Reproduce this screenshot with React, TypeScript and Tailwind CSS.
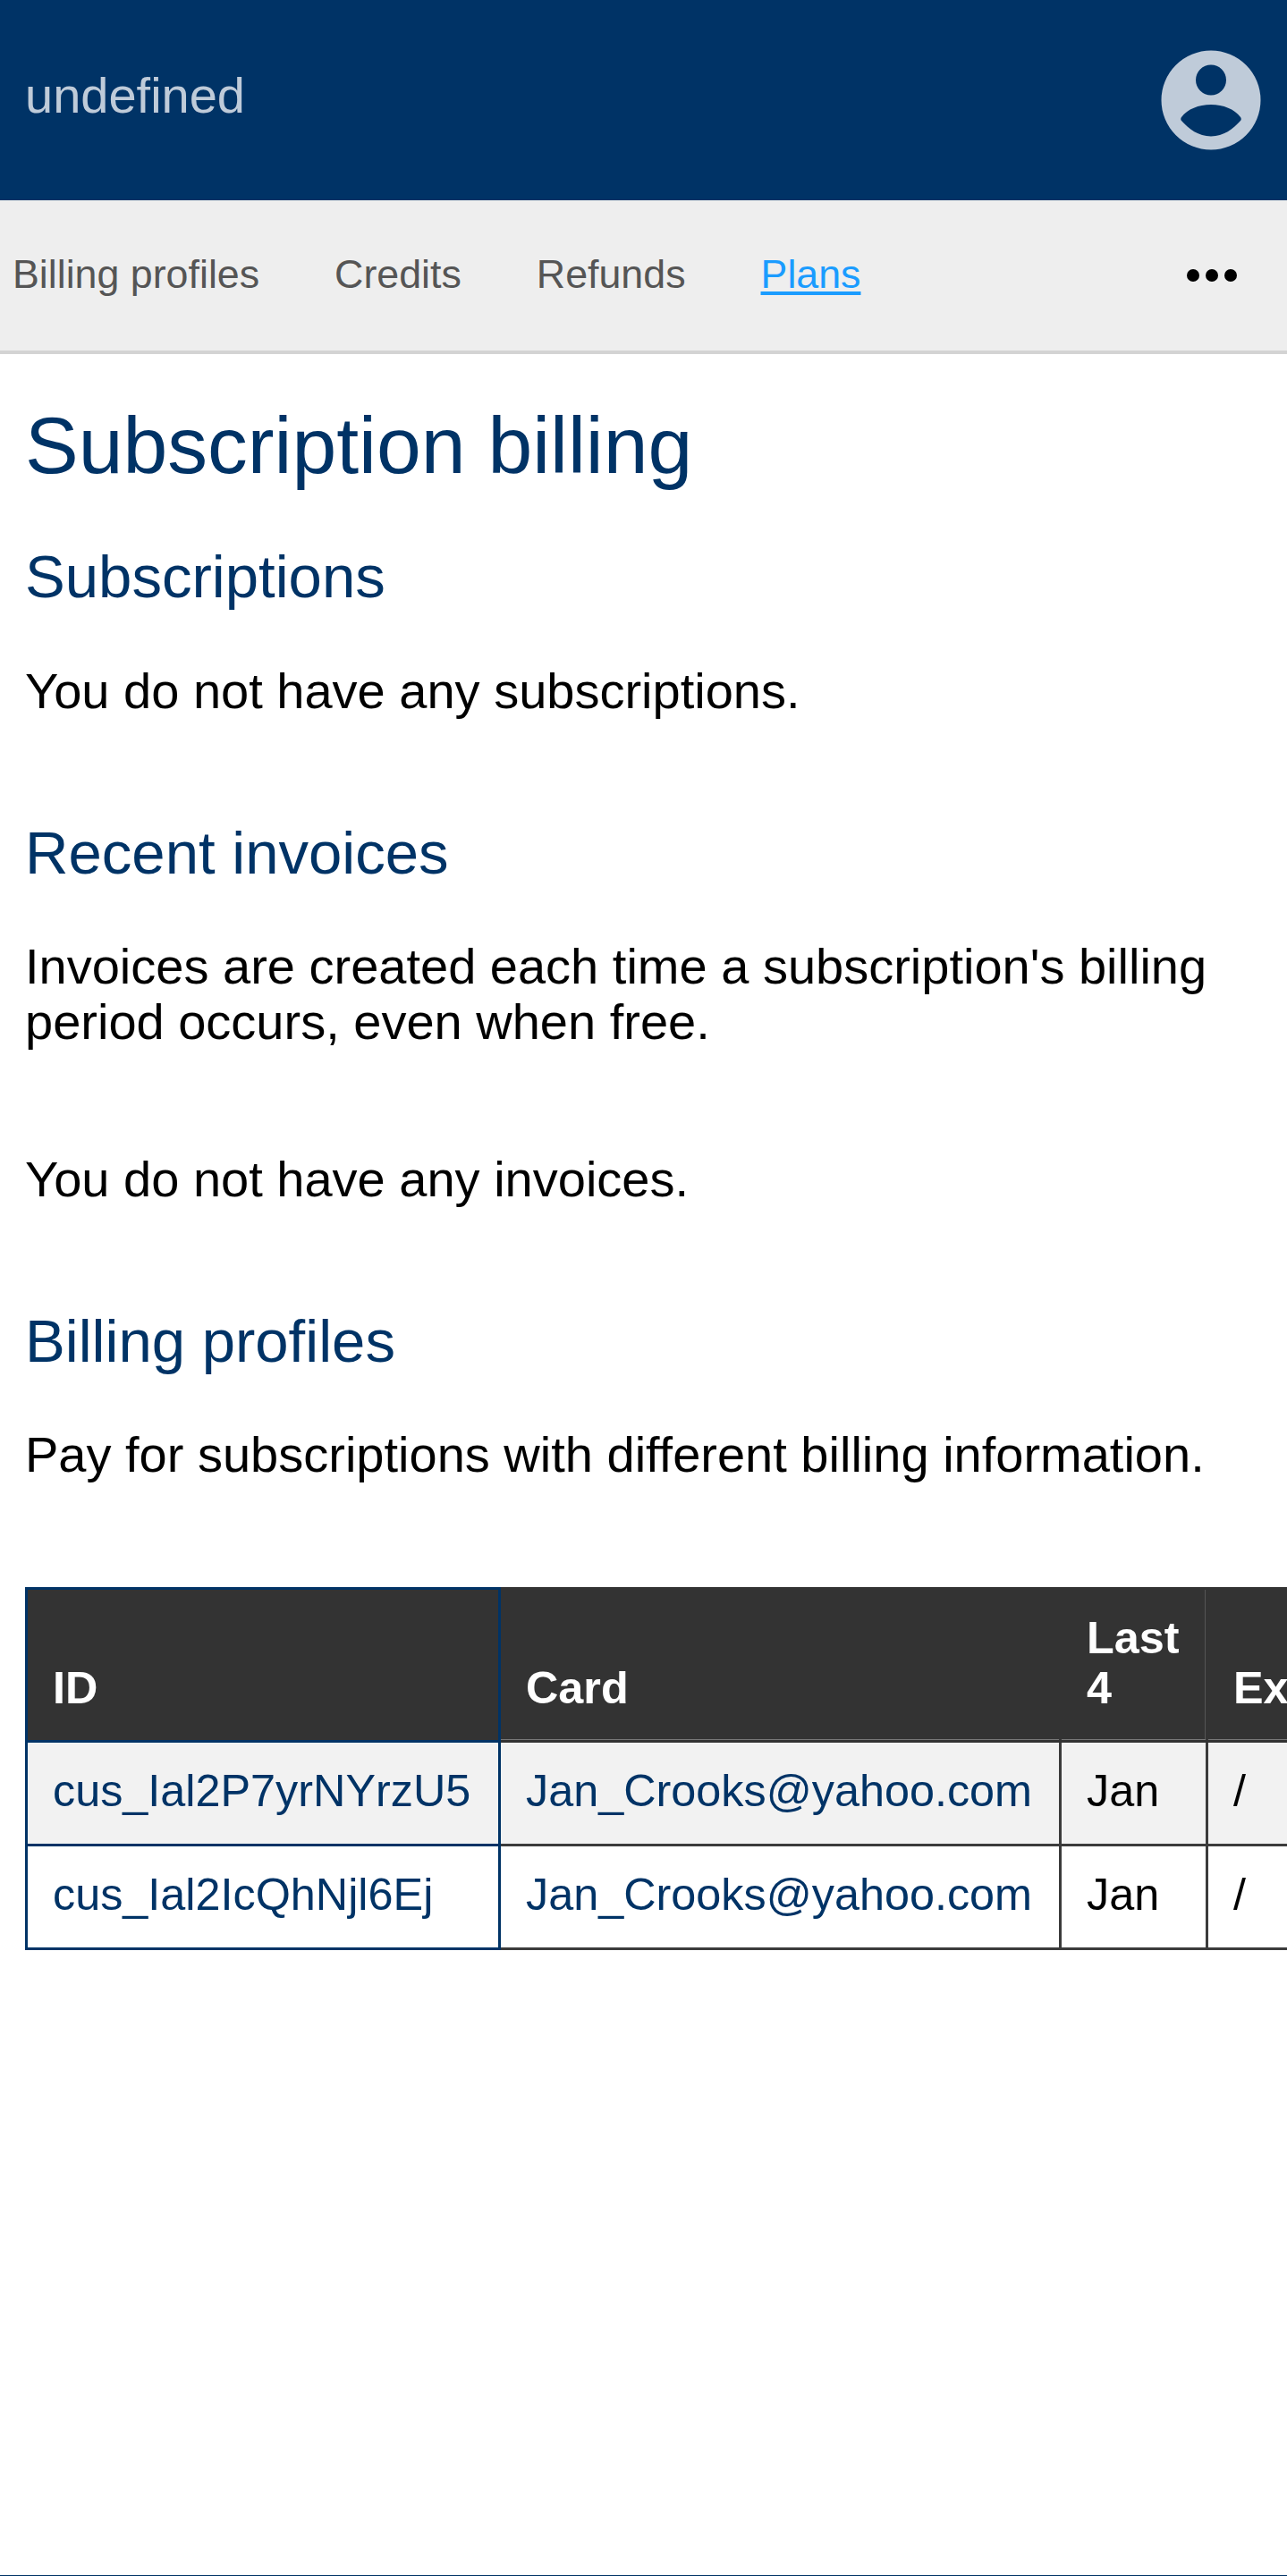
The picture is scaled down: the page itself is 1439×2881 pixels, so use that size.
function Avatar() {
  return (
    <svg width="112" height="112" viewBox="-56 -56 112 112" className="block">
      <path
        fill="#bfcbd9"
        fillRule="evenodd"
        d="M0 -55.5A55.5 55.5 0 1 1 0 55.5A55.5 55.5 0 1 1 0 -55.5ZM0 -39.5A17 17 0 1 0 0 -5.5A17 17 0 1 0 0 -39.5ZM-33 19C-26 10 -14 5 0 5C14 5 26 10 33 19C34 20.5 34 22 33 23C25 32 14 40.5 0 40.5C-14 40.5 -25 32 -33 23C-34 22 -34 20.5 -33 19Z"
      />
    </svg>
  );
}

function Dots() {
  return (
    <svg width="56" height="14" viewBox="0 0 56 14" className="block">
      <circle cx="7" cy="7" r="7" fill="#000" />
      <circle cx="28" cy="7" r="7" fill="#000" />
      <circle cx="49" cy="7" r="7" fill="#000" />
    </svg>
  );
}

const rows = [
  { id: 'cus_Ial2P7yrNYrzU5', bg: 'bg-[#f2f2f2]' },
  { id: 'cus_Ial2IcQhNjl6Ej', bg: 'bg-white' },
];

export default function App() {
  return (
    <div className="flex h-[2881px] flex-col overflow-hidden bg-white font-['Liberation_Sans',Arial,sans-serif] text-black">
      <header className="flex h-[224px] shrink-0 items-center justify-between bg-[#003366] pl-[28px] pr-[29px]">
        <span className="mb-[11px] text-[56px] leading-[62px] text-[#bfcbd9]">undefined</span>
        <Avatar />
      </header>

      <nav className="flex h-[172px] shrink-0 items-center justify-between border-b-4 border-[#d3d3d3] bg-[#eeeeee] pl-[14px] pr-[56px]">
        <div className="mb-[4px] flex items-center gap-[84px] text-[44.75px] leading-[50px] text-[#555555]">
          <span>Billing profiles</span>
          <span>Credits</span>
          <span>Refunds</span>
          <a className="text-[#1a9cff] underline decoration-[4px] underline-offset-[4px]">Plans</a>
        </div>
        <Dots />
      </nav>

      <main className="flex-1 px-[28px]">
        <h1 className="mt-[51px] text-[89.5px] leading-[103px] text-[#003366]">Subscription billing</h1>
        <h2 className="mt-[56px] text-[67.1px] leading-[77px] text-[#003366]">Subscriptions</h2>
        <p className="mt-[59px] text-[56px] leading-[62.6px]">You do not have any subscriptions.</p>

        <h2 className="mt-[110px] text-[67.1px] leading-[77px] text-[#003366]">Recent invoices</h2>
        <p className="mt-[58px] text-[56px] leading-[62.6px]">
          Invoices are created each time a subscription's billing period occurs, even when free.
        </p>
        <p className="mt-[113px] text-[56px] leading-[62.6px]">You do not have any invoices.</p>

        <h2 className="mt-[111px] text-[67.1px] leading-[77px] text-[#003366]">Billing profiles</h2>
        <p className="mt-[58px] text-[56px] leading-[62.6px]">
          Pay for subscriptions with different billing information.
        </p>

        <table className="mt-[116px] w-[1500px] table-fixed border-collapse text-[50.35px] leading-[57px]">
          <colgroup>
            <col className="w-[529px]" />
            <col className="w-[627px]" />
            <col className="w-[164px]" />
            <col className="w-[179px]" />
          </colgroup>
          <thead>
            <tr className="bg-[#333333] text-left font-bold leading-[56px] text-white">
              <th className="border-[3px] border-[#003366] px-[28px] pb-[30px] pt-[26.5px] align-bottom">ID</th>
              <th className="border-[3px] border-[#333333] px-[28px] pb-[30px] pt-[26.5px] align-bottom shadow-[inset_0_-1px_0_#777777]">Card</th>
              <th className="border-[3px] border-[#333333] px-[28px] pb-[30px] pt-[26.5px] align-bottom shadow-[inset_0_-1px_0_#777777,inset_-1px_0_0_#555555]">Last 4</th>
              <th className="border-[3px] border-[#333333] px-[28px] pb-[30px] pt-[26.5px] align-bottom shadow-[inset_0_-1px_0_#777777]">Expires</th>
            </tr>
          </thead>
          <tbody>
            {rows.map((row) => (
              <tr key={row.id} className={row.bg}>
                <td className="border-[3px] border-[#003366] px-[28px] pb-[31.5px] pt-[24.5px] text-[#003366]">{row.id}</td>
                <td className="border-[3px] border-[#3b3b3b] px-[28px] pb-[31.5px] pt-[24.5px] text-[#003366]">Jan_Crooks@yahoo.com</td>
                <td className="border-[3px] border-[#3b3b3b] px-[28px] pb-[31.5px] pt-[24.5px]">Jan</td>
                <td className="border-[3px] border-[#3b3b3b] px-[28px] pb-[31.5px] pt-[24.5px]">/</td>
              </tr>
            ))}
          </tbody>
        </table>
      </main>

      <footer className="h-px shrink-0 bg-[#003366]" />
    </div>
  );
}
